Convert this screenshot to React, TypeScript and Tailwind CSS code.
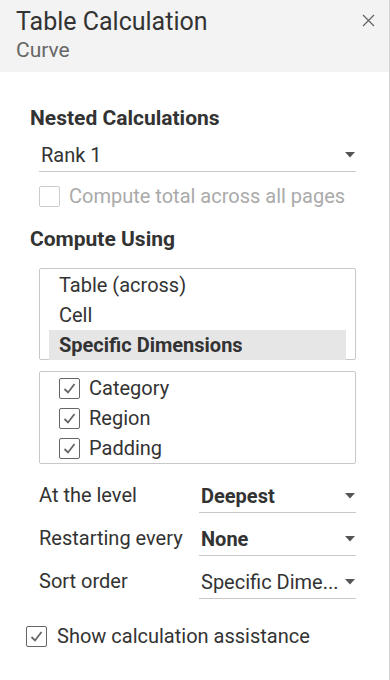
const font = { fontFamily: "Roboto, 'Liberation Sans', sans-serif" };

function Caret() {
  return (
    <svg width="10" height="6" viewBox="0 0 10 6" className="shrink-0">
      <path d="M0 0 L10 0 L5 5.5 Z" fill="#555" />
    </svg>
  );
}

function Box({ checked, disabled }: { checked?: boolean; disabled?: boolean }) {
  return (
    <span
      className={`w-[21px] h-[21px] shrink-0 rounded-[2px] border flex items-center justify-center bg-white ${
        disabled ? "border-[#ccc]" : "border-[#666]"
      }`}
    >
      {checked && (
        <svg width="13" height="11" viewBox="0 0 13 11">
          <path d="M1.5 6 L5 9.5 L11.5 1" fill="none" stroke="#666" strokeWidth="1.8" />
        </svg>
      )}
    </span>
  );
}

function Dropdown({ value, bold }: { value: string; bold?: boolean }) {
  return (
    <div className="flex-1 min-w-0 flex items-center h-[34px] border-b border-[#c8c8c8] pl-[2px] pr-[1px]">
      <span className={`flex-1 min-w-0 whitespace-nowrap text-[20px] leading-[24px] text-[#333] ${bold ? "font-bold" : ""}`}>
        {value}
      </span>
      <Caret />
    </div>
  );
}

export default function App() {
  const rows = [
    { label: "At the level", value: "Deepest", bold: true },
    { label: "Restarting every", value: "None", bold: true },
    { label: "Sort order", value: "Specific Dime...", bold: false },
  ];

  return (
    <div className="w-[390px] h-[680px] bg-white border-r border-[#d4d4d4] overflow-hidden text-[#333]" style={font}>
      <div className="h-[72px] bg-[#f3f3f3] flex justify-between pl-[16px] pr-[14px] pt-[6px]">
        <div className="flex flex-col">
          <span className="text-[25px] leading-[32px] text-[#333]">Table Calculation</span>
          <span className="text-[21px] leading-[24px] text-[#666]">Curve</span>
        </div>
        <svg width="13" height="13" viewBox="0 0 13 13" className="mt-[8px]">
          <path d="M1 1 L12 12 M12 1 L1 12" stroke="#666" strokeWidth="1.3" />
        </svg>
      </div>

      <div className="pl-[30px] pr-[33px] pt-[32px]">
        <div className="text-[21px] font-bold leading-[28px]">Nested Calculations</div>
        <div className="pl-[9px] mt-[6px] flex">
          <Dropdown value="Rank 1" />
        </div>
        <div className="pl-[9px] mt-[12px] flex items-center gap-[9px]">
          <Box disabled />
          <span className="text-[20px] leading-[24px] text-[#aaa]">Compute total across all pages</span>
        </div>

        <div className="text-[21px] font-bold leading-[28px] mt-[17px]">Compute Using</div>

        <div className="ml-[9px] mt-[15px] border border-[#c8c8c8] rounded-[2px] pt-[1px] px-[9px] h-[92px]">
          <div className="h-[30px] flex items-center pl-[10px] text-[20px] leading-[24px]">Table (across)</div>
          <div className="h-[30px] flex items-center pl-[10px] text-[20px] leading-[24px]">Cell</div>
          <div className="h-[30px] flex items-center pl-[10px] text-[20px] leading-[24px] font-bold bg-[#e6e6e6]">
            Specific Dimensions
          </div>
        </div>

        <div className="ml-[9px] mt-[11px] border border-[#c8c8c8] rounded-[2px] pt-[1px] pl-[19px] h-[93px]">
          {["Category", "Region", "Padding"].map((d) => (
            <div key={d} className="h-[30px] flex items-center gap-[9px] text-[20px] leading-[24px]">
              <Box checked />
              <span>{d}</span>
            </div>
          ))}
        </div>

        <div className="ml-[9px] mt-[15px] flex flex-col gap-[9px]">
          {rows.map((r) => (
            <div key={r.label} className="flex items-center">
              <span className="w-[160px] shrink-0 text-[20px] leading-[24px] pb-[2px]">{r.label}</span>
              <Dropdown value={r.value} bold={r.bold} />
            </div>
          ))}
        </div>
      </div>

      <div className="pl-[26px] mt-[25px] flex items-center gap-[10px]">
        <Box checked />
        <span className="text-[20px] leading-[24px]">Show calculation assistance</span>
      </div>
    </div>
  );
}
